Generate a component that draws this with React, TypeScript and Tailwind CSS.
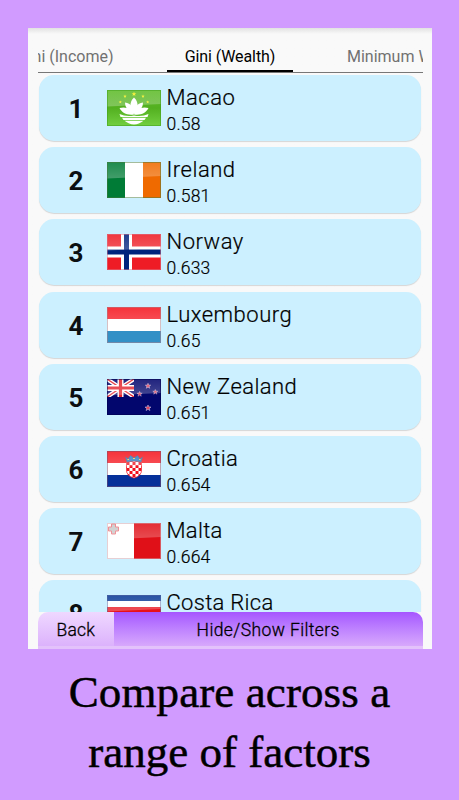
import React from 'react';

interface Country {
  rank: number;
  name: string;
  value: string;
  flag: React.ReactNode;
  tracking: string;
}

const STAR = 'M0,-1 L0.29,-0.34 L1,-0.31 L0.44,0.14 L0.62,0.85 L0,0.42 L-0.62,0.85 L-0.44,0.14 L-1,-0.31 L-0.29,-0.34Z';

// Shared frame: every flag gets the glossy highlight and a thin darker edge
const Flag: React.FC<{ edge: string; children: React.ReactNode }> = ({ edge, children }) => (
  <svg width="54" height="36" viewBox="0 0 54 36" className="shrink-0">
    <defs>
      <linearGradient id="gloss" x1="0" y1="0" x2="0" y2="1">
        <stop offset="0" stopColor="#fff" stopOpacity="0.12" />
        <stop offset="1" stopColor="#fff" stopOpacity="0.26" />
      </linearGradient>
    </defs>
    {children}
    <path d="M0 0H54V14Q27 15 0 16.500Z" fill="url(#gloss)" />
    <rect x="0.5" y="0.5" width="53" height="35" fill="none" stroke={edge} strokeOpacity="0.5" />
  </svg>
);

const Macao = () => (
  <Flag edge="#3f9d1c">
    <defs>
      <linearGradient id="macao" x1="0" y1="0" x2="0" y2="1">
        <stop offset="0" stopColor="#5fbd2a" />
        <stop offset="0.5" stopColor="#53b020" />
        <stop offset="1" stopColor="#72cf40" />
      </linearGradient>
    </defs>
    <rect width="54" height="36" fill="url(#macao)" />
    <g fill="#fff">
      <path d="M27 7.500C32 12 31.500 19 27 24C22.500 19 22 12 27 7.500Z" />
      <path d="M18 12.500C24 13 27 18 27 24C21 22 18 17 18 12.500Z" />
      <path d="M36 12.500C30 13 27 18 27 24C33 22 36 17 36 12.500Z" />
      <path d="M12.500 18C19 16 25 19 27 24.500C20 25.500 15 23 12.500 18Z" />
      <path d="M41.500 18C35 16 29 19 27 24.500C34 25.500 39 23 41.500 18Z" />
      <path d="M12.500 24Q19 27 27 25.500Q35 27 41.500 24L40.500 27H13.500Z" />
      <path d="M15 27.800H39L37.500 30H16.500Z" />
      <path d="M17.500 30.800H36.500Q32 34.500 27 34.500Q22 34.500 17.500 30.800Z" />
    </g>
    <g fill="#f4ee1c">
      <path d={STAR} transform="translate(27 4) scale(2.3)" />
      <path d={STAR} transform="translate(18 6.300) scale(1.7)" />
      <path d={STAR} transform="translate(36 6.300) scale(1.7)" />
      <path d={STAR} transform="translate(13.300 12) scale(1.6)" />
      <path d={STAR} transform="translate(40.700 12) scale(1.6)" />
    </g>
  </Flag>
);

const Ireland = () => (
  <Flag edge="#4a7a3a">
    <rect width="18" height="36" fill="#007b36" />
    <rect x="18" width="18" height="36" fill="#fff" />
    <rect x="36" width="18" height="36" fill="#ef6a00" />
  </Flag>
);

const Norway = () => (
  <Flag edge="#d9788a">
    <rect width="54" height="36" fill="#ee1c25" />
    <path d="M14 0H25V36H14ZM0 12.500H54V23.500H0Z" fill="#fff" />
    <path d="M17 0H22V36H17ZM0 15.500H54V20.500H0Z" fill="#00247d" />
  </Flag>
);

const Luxembourg = () => (
  <Flag edge="#b08088">
    <rect width="54" height="12" fill="#f5161f" />
    <rect y="12" width="54" height="12" fill="#fff" />
    <rect y="24" width="54" height="12" fill="#3290c6" />
  </Flag>
);

const NewZealand = () => (
  <Flag edge="#00004a">
    <rect width="54" height="36" fill="#02066d" />
    <svg width="27" height="18" viewBox="0 0 27 18">
      <path d="M0 0L27 18M27 0L0 18" stroke="#fff" strokeWidth="4" />
      <path d="M0 0L27 18M27 0L0 18" stroke="#e3222c" strokeWidth="1.400" />
      <path d="M13.500 0V18M0 9H27" stroke="#fff" strokeWidth="6" />
      <path d="M13.500 0V18M0 9H27" stroke="#e3222c" strokeWidth="3.200" />
    </svg>
    <g fill="#e0405a" stroke="#c0b8e0" strokeWidth="0.200">
      <path d={STAR} transform="translate(41 7) scale(2.7)" />
      <path d={STAR} transform="translate(48.300 13) scale(2.5)" />
      <path d={STAR} transform="translate(32.600 15) scale(2.6)" />
      <path d={STAR} transform="translate(41 29) scale(3)" />
    </g>
  </Flag>
);

const Croatia = () => (
  <Flag edge="#80506c">
    <rect width="54" height="12" fill="#f5161f" />
    <rect y="12" width="54" height="12" fill="#fff" />
    <rect y="24" width="54" height="12" fill="#05309a" />
    <defs>
      <pattern id="check" x="19.500" y="11" width="6" height="6" patternUnits="userSpaceOnUse">
        <rect width="6" height="6" fill="#fff" />
        <path d="M0 0H3V3H0ZM3 3H6V6H3Z" fill="#f0101c" />
      </pattern>
    </defs>
    <path d="M19.500 11Q27 9 34.500 11V19Q34.500 25 27 27Q19.500 25 19.500 19Z" fill="url(#check)" stroke="#ef2530" strokeWidth="0.800" />
    <path d="M18.500 6L21 8L23.500 4.500L27 7L30.500 4.500L33 8L35.500 6L34 11Q27 8.800 20 11Z" fill="#2d7fc0" stroke="#43658d" strokeWidth="0.500" />
    <path d="M20.500 8.500H22M26 7.500H28M32 8.500H33.500" stroke="#f0c94a" />
  </Flag>
);

const Malta = () => (
  <Flag edge="#d0a0a8">
    <rect width="27" height="36" fill="#fff" />
    <rect x="27" width="27" height="36" fill="#e01018" />
    <path d="M4.500 1H8.500V4H11.500V8H8.500V11H4.500V8H1.500V4H4.500Z" fill="#c8c8c8" stroke="#ee7880" />
  </Flag>
);

const CostaRica = () => (
  <Flag edge="#5868a0">
    <rect width="54" height="36" fill="#fff" />
    <rect width="54" height="6" fill="#0b3b97" />
    <rect y="12" width="54" height="12" fill="#e8101a" />
    <rect y="30" width="54" height="6" fill="#0b3b97" />
  </Flag>
);

const countries: Country[] = [
  { rank: 1, name: 'Macao', value: '0.58', flag: <Macao />, tracking: 'tracking-[0.5px]' },
  { rank: 2, name: 'Ireland', value: '0.581', flag: <Ireland />, tracking: 'tracking-[0.5px]' },
  { rank: 3, name: 'Norway', value: '0.633', flag: <Norway />, tracking: 'tracking-[0.5px]' },
  { rank: 4, name: 'Luxembourg', value: '0.65', flag: <Luxembourg />, tracking: 'tracking-[0.5px]' },
  { rank: 5, name: 'New Zealand', value: '0.651', flag: <NewZealand />, tracking: 'tracking-[0.4px]' },
  { rank: 6, name: 'Croatia', value: '0.654', flag: <Croatia />, tracking: 'tracking-[0.3px]' },
  { rank: 7, name: 'Malta', value: '0.664', flag: <Malta />, tracking: 'tracking-[0.3px]' },
  { rank: 8, name: 'Costa Rica', value: '0.67', flag: <CostaRica />, tracking: 'tracking-[0.3px]' },
];

const CountryRow: React.FC<{ country: Country }> = ({ country }) => (
  <div className="flex h-[66px] shrink-0 items-start rounded-[15px] bg-[#ccf0ff] shadow-[0_1px_1px_rgba(0,0,0,0.14)]">
    <div className="w-[68px] pt-[18px] pl-[6px] text-center text-[26px] leading-[32px] font-bold text-[#0b0f11]">{country.rank}</div>
    <div className="pt-[15px]">{country.flag}</div>
    <div className="pt-[9px] pl-[5.500px] font-light whitespace-nowrap text-black [-webkit-text-stroke:0.2px_#000]">
      <div className={`text-[22px] leading-[28px] ${country.tracking}`}>{country.name}</div>
      <div className="text-[17.500px] leading-[24px] tracking-[0.2px]">{country.value}</div>
    </div>
  </div>
);

export default function App() {
  return (
    <div className="flex h-[800px] w-[459px] flex-col overflow-hidden bg-[#d19bff] pt-[28px] font-['Roboto',sans-serif]">
      {/* Phone screen */}
      <div className="ml-[28px] flex h-[621px] w-[404px] shrink-0 flex-col bg-[#f9f9f9] bg-linear-to-b from-[#e2e2e2] to-[#f9f9f9] to-[6px] px-[9.500px]">
        {/* Tabs */}
        <div className="flex h-[45px] shrink-0 overflow-hidden border-b border-[#777] text-[16px] leading-[20px] whitespace-nowrap">
          <div className="flex w-[129.500px] justify-end overflow-hidden pt-[18.500px] pr-[53.500px] text-[#717171]">Gini (Income)</div>
          <div className="h-[45px] w-[126px] border-b-3 border-black pt-[18.500px] text-center tracking-[-0.1px] text-black">Gini (Wealth)</div>
          <div className="w-[129.500px] overflow-hidden pt-[18.500px] pl-[54px] text-[#717171]">Minimum Wage</div>
        </div>

        {/* Ranking */}
        <div className="flex h-[539px] shrink-0 flex-col gap-[6.180px] overflow-hidden px-[1.500px] pt-[2px]">
          {countries.map(c => (
            <CountryRow key={c.rank} country={c} />
          ))}
        </div>

        {/* Bottom buttons */}
        <div className="flex h-[37px] shrink-0 text-[17.500px] leading-[36px] font-light text-black [-webkit-text-stroke:0.3px_#000]">
          <button className="w-[76.500px] rounded-tl-[10px] border-b-3 border-[#e3c2fb] bg-linear-to-b from-[#efd8ff] to-[#dcb2fc] tracking-[0.2px]">Back</button>
          <button className="flex-1 rounded-tr-[10px] border-b-3 border-[#e3c2fb] bg-linear-to-b from-[#a655ff] to-[#d8a8fc] tracking-[0.4px]">Hide/Show Filters</button>
        </div>
      </div>

      {/* Caption */}
      <div className="pt-[13px] text-center font-['Liberation_Serif',serif] text-[45px] leading-[60px] whitespace-nowrap text-black [-webkit-text-stroke:0.5px_#000]">
        <div className="tracking-[0.1px]">Compare across a</div>
        <div>range of factors</div>
      </div>
    </div>
  );
}
